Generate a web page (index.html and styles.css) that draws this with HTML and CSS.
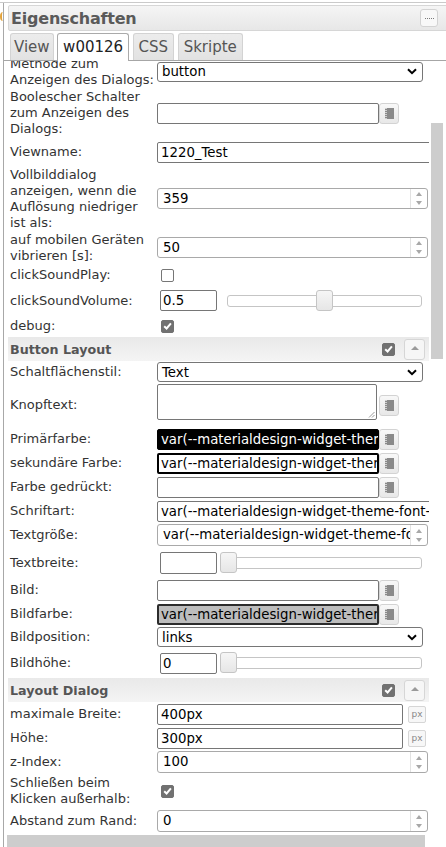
FILE: index.html
```html
<!DOCTYPE html>
<html lang="de">
<head>
<meta charset="utf-8">
<title>Eigenschaften</title>
<link rel="stylesheet" href="styles.css">
</head>
<body>
<div class="topline"></div>
<div class="main">
  <div class="edge"><div class="edge-mark"></div></div>
  <div class="frame">
    <div class="titlebar">
      <span class="title">Eigenschaften</span>
      <span class="dots-btn"><span class="dots"></span></span>
    </div>
    <div class="tabs">
      <div class="tab first">View</div>
      <div class="tab active">w00126</div>
      <div class="tab">CSS</div>
      <div class="tab">Skripte</div>
    </div>
    <div class="scroller">
      <div class="scroll-main">
        <div class="viewport">
          <div class="rows">
            <div class="row h33">
              <div class="lbl">Methode zum<br>Anzeigen des Dialogs:</div>
              <div class="val"><div class="select">button<svg class="chev" width="10" height="7" viewBox="0 0 10 7"><path d="M1 1.2 L5 5.2 L9 1.2" fill="none" stroke="#000" stroke-width="2"/></svg></div></div>
            </div>
            <div class="row h50">
              <div class="lbl">Boolescher Schalter<br>zum Anzeigen des<br>Dialogs:</div>
              <div class="val"><div class="field w222"></div><span class="pick"><svg width="9" height="11" viewBox="0 0 9 11"><rect x="2" y="0" width="7" height="11" fill="#8a8a8a"/><rect x="0" y="0" width="2" height="11" fill="#cfcfcf"/><g fill="#8a8a8a"><rect x="0" y="1" width="2" height="1"/><rect x="0" y="3" width="2" height="1"/><rect x="0" y="5" width="2" height="1"/><rect x="0" y="7" width="2" height="1"/><rect x="0" y="9" width="2" height="1"/></g></svg></span></div>
            </div>
            <div class="row h28">
              <div class="lbl">Viewname:</div>
              <div class="val"><div class="field wide">1220_Test</div></div>
            </div>
            <div class="row h65">
              <div class="lbl">Vollbilddialog<br>anzeigen, wenn die<br>Auflösung niedriger<br>ist als:</div>
              <div class="val"><div class="spin t21"><span class="spin-val">359</span><span class="spin-btns"><span class="up"></span><span class="down"></span></span></div></div>
            </div>
            <div class="row h33">
              <div class="lbl">auf mobilen Geräten<br>vibrieren [s]:</div>
              <div class="val"><div class="spin t21"><span class="spin-val">50</span><span class="spin-btns"><span class="up"></span><span class="down"></span></span></div></div>
            </div>
            <div class="row h22">
              <div class="lbl">clickSoundPlay:</div>
              <div class="val"><span class="cb"></span></div>
            </div>
            <div class="row h29">
              <div class="lbl">clickSoundVolume:</div>
              <div class="val"><div class="field small">0.5</div><div class="slider"><span class="handle" style="left:50%"></span></div></div>
            </div>
            <div class="row h22">
              <div class="lbl">debug:</div>
              <div class="val"><span class="cb on"><svg width="9" height="8" viewBox="0 0 9 8"><path d="M1.2 4.2 L3.6 6.5 L7.9 1.4" fill="none" stroke="#fff" stroke-width="2"/></svg></span></div>
            </div>
            <div class="section">
              <span class="section-title">Button Layout</span>
              <span class="cb on"><svg width="9" height="8" viewBox="0 0 9 8"><path d="M1.2 4.2 L3.6 6.5 L7.9 1.4" fill="none" stroke="#fff" stroke-width="2"/></svg></span>
              <span class="toggle"><span class="tri"></span></span>
            </div>
            <div class="row h22">
              <div class="lbl">Schaltflächenstil:</div>
              <div class="val"><div class="select">Text<svg class="chev" width="10" height="7" viewBox="0 0 10 7"><path d="M1 1.2 L5 5.2 L9 1.2" fill="none" stroke="#000" stroke-width="2"/></svg></div></div>
            </div>
            <div class="row h44">
              <div class="lbl">Knopftext:</div>
              <div class="val"><div class="area"><svg class="grip" width="7" height="7" viewBox="0 0 7 7"><path d="M6.5 1 L1 6.5 M6.5 4 L4 6.5" stroke="#999" stroke-width="1"/></svg></div><span class="pick sep"><svg width="9" height="11" viewBox="0 0 9 11"><rect x="2" y="0" width="7" height="11" fill="#8a8a8a"/><rect x="0" y="0" width="2" height="11" fill="#cfcfcf"/><g fill="#8a8a8a"><rect x="0" y="1" width="2" height="1"/><rect x="0" y="3" width="2" height="1"/><rect x="0" y="5" width="2" height="1"/><rect x="0" y="7" width="2" height="1"/><rect x="0" y="9" width="2" height="1"/></g></svg></span></div>
            </div>
            <div class="row h24">
              <div class="lbl">Primärfarbe:</div>
              <div class="val"><div class="field w222 black">var(--materialdesign-widget-theme-color-primary)</div><span class="pick"><svg width="9" height="11" viewBox="0 0 9 11"><rect x="2" y="0" width="7" height="11" fill="#8a8a8a"/><rect x="0" y="0" width="2" height="11" fill="#cfcfcf"/><g fill="#8a8a8a"><rect x="0" y="1" width="2" height="1"/><rect x="0" y="3" width="2" height="1"/><rect x="0" y="5" width="2" height="1"/><rect x="0" y="7" width="2" height="1"/><rect x="0" y="9" width="2" height="1"/></g></svg></span></div>
            </div>
            <div class="row h24">
              <div class="lbl">sekundäre Farbe:</div>
              <div class="val"><div class="field w222 thick">var(--materialdesign-widget-theme-color-secondary)</div><span class="pick"><svg width="9" height="11" viewBox="0 0 9 11"><rect x="2" y="0" width="7" height="11" fill="#8a8a8a"/><rect x="0" y="0" width="2" height="11" fill="#cfcfcf"/><g fill="#8a8a8a"><rect x="0" y="1" width="2" height="1"/><rect x="0" y="3" width="2" height="1"/><rect x="0" y="5" width="2" height="1"/><rect x="0" y="7" width="2" height="1"/><rect x="0" y="9" width="2" height="1"/></g></svg></span></div>
            </div>
            <div class="row h24">
              <div class="lbl">Farbe gedrückt:</div>
              <div class="val"><div class="field w222"></div><span class="pick"><svg width="9" height="11" viewBox="0 0 9 11"><rect x="2" y="0" width="7" height="11" fill="#8a8a8a"/><rect x="0" y="0" width="2" height="11" fill="#cfcfcf"/><g fill="#8a8a8a"><rect x="0" y="1" width="2" height="1"/><rect x="0" y="3" width="2" height="1"/><rect x="0" y="5" width="2" height="1"/><rect x="0" y="7" width="2" height="1"/><rect x="0" y="9" width="2" height="1"/></g></svg></span></div>
            </div>
            <div class="row h24">
              <div class="lbl">Schriftart:</div>
              <div class="val"><div class="field wide">var(--materialdesign-widget-theme-font-family)</div></div>
            </div>
            <div class="row h24">
              <div class="lbl">Textgröße:</div>
              <div class="val"><div class="spin"><span class="spin-val">var(--materialdesign-widget-theme-font-size)</span><span class="spin-btns"><span class="up"></span><span class="down"></span></span></div></div>
            </div>
            <div class="row h31">
              <div class="lbl">Textbreite:</div>
              <div class="val"><div class="field small t22"></div><div class="slider"><span class="handle" style="left:0%"></span></div></div>
            </div>
            <div class="row h24">
              <div class="lbl">Bild:</div>
              <div class="val"><div class="field w222"></div><span class="pick"><svg width="9" height="11" viewBox="0 0 9 11"><rect x="2" y="0" width="7" height="11" fill="#8a8a8a"/><rect x="0" y="0" width="2" height="11" fill="#cfcfcf"/><g fill="#8a8a8a"><rect x="0" y="1" width="2" height="1"/><rect x="0" y="3" width="2" height="1"/><rect x="0" y="5" width="2" height="1"/><rect x="0" y="7" width="2" height="1"/><rect x="0" y="9" width="2" height="1"/></g></svg></span></div>
            </div>
            <div class="row h24">
              <div class="lbl">Bildfarbe:</div>
              <div class="val"><div class="field w222 grey">var(--materialdesign-widget-theme-color-primary)</div><span class="pick"><svg width="9" height="11" viewBox="0 0 9 11"><rect x="2" y="0" width="7" height="11" fill="#8a8a8a"/><rect x="0" y="0" width="2" height="11" fill="#cfcfcf"/><g fill="#8a8a8a"><rect x="0" y="1" width="2" height="1"/><rect x="0" y="3" width="2" height="1"/><rect x="0" y="5" width="2" height="1"/><rect x="0" y="7" width="2" height="1"/><rect x="0" y="9" width="2" height="1"/></g></svg></span></div>
            </div>
            <div class="row h22">
              <div class="lbl">Bildposition:</div>
              <div class="val"><div class="select">links<svg class="chev" width="10" height="7" viewBox="0 0 10 7"><path d="M1 1.2 L5 5.2 L9 1.2" fill="none" stroke="#000" stroke-width="2"/></svg></div></div>
            </div>
            <div class="row h30">
              <div class="lbl">Bildhöhe:</div>
              <div class="val"><div class="field small">0</div><div class="slider"><span class="handle" style="left:0%"></span></div></div>
            </div>
            <div class="section">
              <span class="section-title">Layout Dialog</span>
              <span class="cb on"><svg width="9" height="8" viewBox="0 0 9 8"><path d="M1.2 4.2 L3.6 6.5 L7.9 1.4" fill="none" stroke="#fff" stroke-width="2"/></svg></span>
              <span class="toggle"><span class="tri"></span></span>
            </div>
            <div class="row h24">
              <div class="lbl">maximale Breite:</div>
              <div class="val"><div class="field w246">400px</div><span class="px">px</span></div>
            </div>
            <div class="row h24">
              <div class="lbl">Höhe:</div>
              <div class="val"><div class="field w246">300px</div><span class="px">px</span></div>
            </div>
            <div class="row h24">
              <div class="lbl">z-Index:</div>
              <div class="val"><div class="spin"><span class="spin-val">100</span><span class="spin-btns"><span class="up"></span><span class="down"></span></span></div></div>
            </div>
            <div class="row h34">
              <div class="lbl">Schließen beim<br>Klicken außerhalb:</div>
              <div class="val"><span class="cb on"><svg width="9" height="8" viewBox="0 0 9 8"><path d="M1.2 4.2 L3.6 6.5 L7.9 1.4" fill="none" stroke="#fff" stroke-width="2"/></svg></span></div>
            </div>
            <div class="row h26">
              <div class="lbl">Abstand zum Rand:</div>
              <div class="val"><div class="spin"><span class="spin-val">0</span><span class="spin-btns"><span class="up"></span><span class="down"></span></span></div></div>
            </div>
          </div>
        </div>
        <div class="vbar"><div class="vthumb"></div></div>
      </div>
      <div class="hbar"><div class="hthumb"></div></div>
    </div>
  </div>
</div>
</body>
</html>
```

FILE: styles.css
```css
* { box-sizing: border-box; }
html, body { margin: 0; padding: 0; }
body {
  width: 446px;
  height: 847px;
  overflow: hidden;
  background: #fff;
  font-family: "DejaVu Sans", Verdana, sans-serif;
  font-size: 13px;
  color: #333;
}
.topline { height: 1px; margin-top: 2px; background: #cacaca; }
.main { display: flex; height: 844px; }
.edge { width: 3px; overflow: hidden; padding-top: 9px; }
.edge-mark { width: 6px; height: 9px; border-left: 2px solid #e2a23a; border-radius: 50% 0 0 50%; }
.frame {
  flex: 1;
  min-width: 0;
  border-left: 1px solid #a8a8a8;
  display: flex;
  flex-direction: column;
}

/* title bar */
.titlebar {
  height: 26px;
  margin: 2px -10px 0 4px;
  border: 1px solid #d6d6d6;
  border-radius: 2px;
  background: linear-gradient(#f5f5f5, #e7e7e7);
  display: flex;
  align-items: center;
  padding-left: 2px;
}
.title { font-weight: bold; font-size: 16px; color: #5a5a5a; letter-spacing: -0.2px; }
.dots-btn {
  margin-left: auto;
  margin-right: 17px;
  width: 18px;
  height: 18px;
  border: 1px solid #d3d3d3;
  border-radius: 3px;
  background: #f8f8f8;
  display: flex;
  align-items: center;
  justify-content: center;
}
.dots { width: 9px; height: 0; border-top: 1px dotted #7a7a7a; }

/* tabs */
.tabs {
  height: 30px;
  display: flex;
  align-items: flex-end;
  gap: 3.5px;
  padding: 2px 0 0 6px;
  border-bottom: 1px solid #a6a6a6;
}
.tab {
  height: 27px;
  line-height: 26px;
  padding: 0 5px;
  border: 1px solid #d3d3d3;
  border-bottom: 0;
  border-radius: 3px 3px 0 0;
  background: linear-gradient(#ececec, #e2e2e2);
  color: #555;
  font-size: 15px;
}
.tab.first { padding: 0 3px; }
.tab.active {
  height: 28px;
  margin-bottom: -1px;
  background: #fff;
  border-color: #aaa;
  color: #222;
}

/* scroll area */
.scroller { flex: 1; display: flex; flex-direction: column; min-height: 0; }
.scroll-main { display: flex; height: 774px; }
.viewport { margin-left: 4px; width: 421px; height: 774px; overflow: hidden; }
.vbar { flex: 1; padding: 62px 3px 0 2px; }
.vthumb { height: 236px; background: #cdcdcd; }
.hbar { height: 12px; padding-left: 3px; }
.hthumb { width: 418px; height: 12px; background: #cdcdcd; }

.rows { margin-top: -6px; }
.row {
  display: grid;
  grid-template-columns: 149px minmax(0, 1fr);
  align-items: center;
}
.h22 { height: 22px; }
.h24 { height: 24px; }
.h26 { height: 26px; }
.h28 { height: 28px; }
.h29 { height: 29px; }
.h30 { height: 30px; }
.h31 { height: 31px; }
.h33 { height: 33px; }
.h34 { height: 34px; }
.h44 { height: 44px; }
.h50 { height: 50px; }
.h65 { height: 65px; }

.lbl { padding-left: 2px; line-height: 16px; white-space: nowrap; color: #333; }
.val { display: flex; align-items: center; font-size: 13.3px; }
.val > * { flex-shrink: 0; }

/* controls */
.select {
  width: 266px;
  height: 20px;
  border: 1px solid #767676;
  border-radius: 3px;
  padding-left: 4px;
  display: flex;
  align-items: center;
  justify-content: space-between;
  color: #000;
}
.chev { margin-right: 5px; }

.field {
  height: 21px;
  border: 1px solid #767676;
  border-radius: 2px;
  padding: 0 3px;
  line-height: 19px;
  color: #000;
  white-space: nowrap;
  overflow: hidden;
}
.w222 { width: 222px; }
.w246 { width: 246px; }
.wide { width: 290px; }
.small { width: 57px; margin-left: 3px; padding-left: 2px; }
.t22 { height: 22px; }
.field.black { background: #000; color: #fff; border-color: #000; }
.field.thick { border: 2px solid #000; padding-left: 2px; line-height: 17px; }
.field.grey { background: #bdbdbd; border: 2px solid #2c2c2c; padding-left: 2px; line-height: 17px; }

.pick {
  width: 20px;
  height: 21px;
  border: 1px solid #d3d3d3;
  border-radius: 3px;
  background: linear-gradient(#f8f8f8, #e8e8e8);
  display: flex;
  align-items: center;
  justify-content: center;
}
.pick.sep { margin-left: 2px; }

.area {
  position: relative;
  width: 220px;
  height: 36px;
  margin-bottom: 6px;
  border: 1px solid #767676;
  border-radius: 2px;
}
.grip { position: absolute; right: 1px; bottom: 1px; }

.spin {
  width: 271px;
  height: 22px;
  border: 1px solid #a9a9a9;
  border-radius: 3px;
  display: flex;
  overflow: hidden;
}
.spin.t21 { height: 21px; }
.spin-val {
  flex: 1;
  min-width: 0;
  padding-left: 5px;
  line-height: 19px;
  overflow: hidden;
  white-space: nowrap;
  color: #000;
}
.spin-btns {
  width: 17px;
  border-left: 1px solid #e2e2e2;
  display: flex;
  flex-direction: column;
  align-items: center;
  justify-content: center;
  gap: 5px;
}
.up, .down { width: 0; height: 0; border-left: 3.5px solid transparent; border-right: 3.5px solid transparent; }
.up { border-bottom: 4px solid #a8a8a8; }
.down { border-top: 4px solid #a8a8a8; }

.slider {
  position: relative;
  width: 195px;
  height: 12px;
  margin-left: 10px;
  border: 1px solid #c5c5c5;
  border-radius: 3px;
  background: #fff;
}
.handle {
  position: absolute;
  top: -6px;
  width: 17px;
  height: 21px;
  margin-left: -8.5px;
  border: 1px solid #c5c5c5;
  border-radius: 3px;
  background: linear-gradient(#f6f6f6, #e6e6e6);
}

.cb {
  width: 13px;
  height: 13px;
  margin-left: 4px;
  border: 1px solid #767676;
  border-radius: 2px;
  background: #fff;
}
.cb.on {
  background: #717171;
  border-color: #717171;
  display: flex;
  align-items: center;
  justify-content: center;
}

.px {
  width: 18px;
  height: 17px;
  margin-left: 5px;
  border: 1px solid #d6d6d6;
  border-radius: 2px;
  background: #f7f7f7;
  font-size: 9px;
  color: #888;
  display: flex;
  align-items: center;
  justify-content: center;
}

/* section headers */
.section {
  height: 24px;
  display: flex;
  align-items: center;
  padding-left: 2px;
  background: linear-gradient(#e9e9e9, #f4f4f4);
}
.section-title { font-weight: bold; font-size: 12.7px; color: #555; }
.section .cb { margin-left: auto; }
.toggle {
  width: 21px;
  height: 21px;
  margin: 0 4px 0 9px;
  border: 1px solid #d6d6d6;
  border-radius: 3px;
  background: #f6f6f6;
  display: flex;
  align-items: center;
  justify-content: center;
}
.tri { width: 0; height: 0; border-left: 4px solid transparent; border-right: 4px solid transparent; border-bottom: 4px solid #9a9a9a; margin-bottom: 2px; }
```
